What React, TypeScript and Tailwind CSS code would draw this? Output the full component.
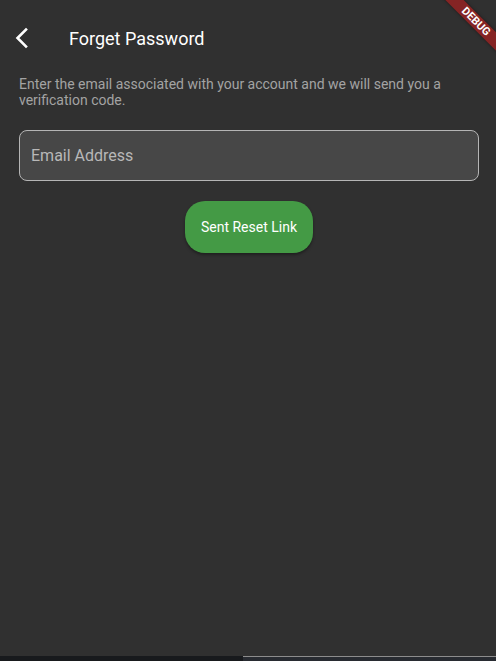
import React from 'react';

function DebugBanner() {
  return (
    <div className="pointer-events-none absolute right-0 top-0 h-[60px] w-[60px] overflow-hidden">
      <div className="absolute left-[-5px] top-[15px] flex h-[13px] w-[90px] rotate-45 items-center justify-center bg-[#852424] shadow-[0_0_3px_rgba(0,0,0,0.5)]">
        <span className="text-[11px] font-bold leading-none text-white">DEBUG</span>
      </div>
    </div>
  );
}

export default function App() {
  return (
    <div className="relative flex h-[661px] w-full flex-col bg-[#303030] font-['Roboto',sans-serif]">
      <DebugBanner />

      <header className="flex h-[76px] items-center">
        <button className="ml-[12px] flex h-[24px] w-[24px] items-center justify-center">
          <svg width="24" height="24" viewBox="0 0 24 24" fill="none">
            <polyline points="14,3.5 5.5,12 14,20.5" stroke="white" strokeWidth="2.6" strokeLinecap="square" />
          </svg>
        </button>
        <h1 className="ml-[33px] text-[18px] font-normal text-white">Forget Password</h1>
      </header>

      <main className="flex flex-1 flex-col pl-[19px] pr-[17px]">
        <p className="text-[14px] leading-[16px] text-[#a3a3a3]">
          Enter the email associated with your account and we will send you a verification code.
        </p>

        <div className="mt-[22px] flex h-[51px] items-center rounded-[8px] border border-[#b5b5b5] bg-[#474747] px-[11px]">
          <span className="text-[16px] text-[#b8b8b8]">Email Address</span>
        </div>

        <div className="mt-[20px] flex justify-center">
          <button className="h-[52px] w-[128px] rounded-[20px] bg-[#449a45] text-[14px] font-normal text-white shadow-[0_2px_3px_rgba(0,0,0,0.35)]">
            Sent Reset Link
          </button>
        </div>
      </main>

      <div className="flex h-[5px]">
        <div className="w-[243px] bg-[#181a1d]" />
        <div className="flex flex-1 flex-col">
          <div className="h-px bg-[#8c8c8c]" />
          <div className="flex-1 bg-[#282b31]" />
        </div>
      </div>
    </div>
  );
}
